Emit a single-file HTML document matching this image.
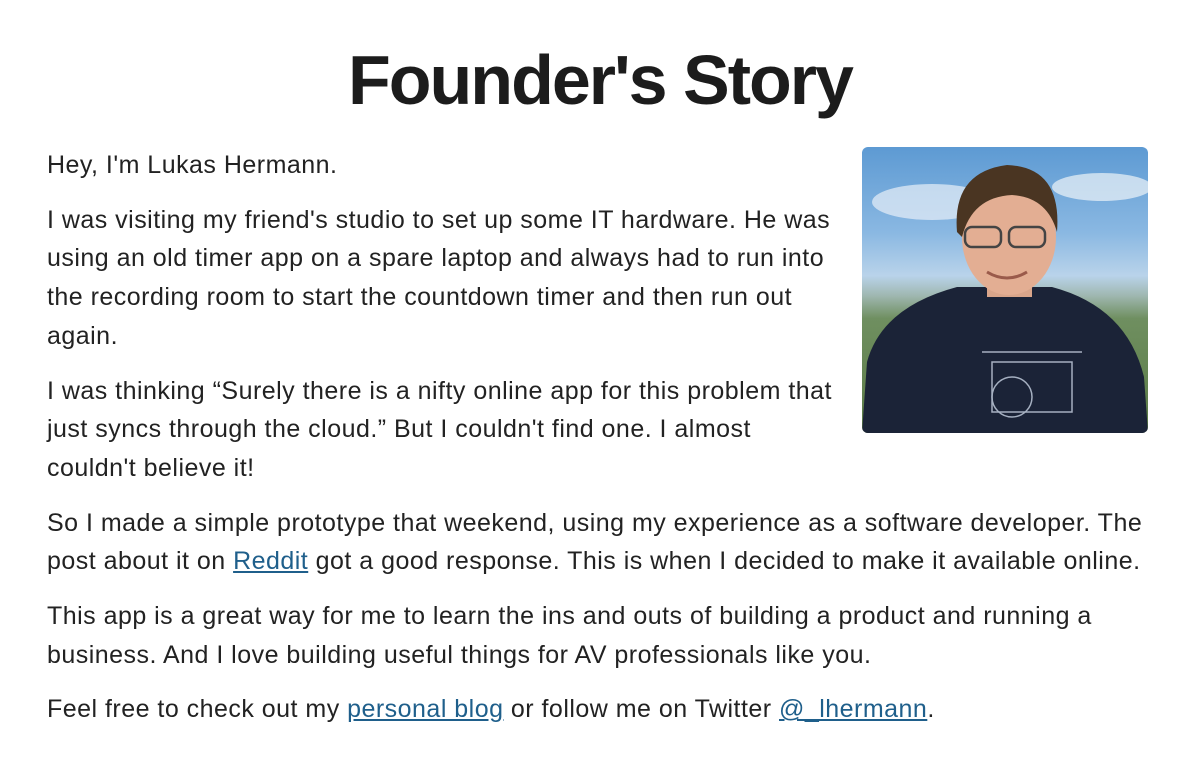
<!DOCTYPE html>
<html><head><meta charset="utf-8"><style>
html,body{margin:0;padding:0;background:#fff;width:1200px;height:772px;overflow:hidden}
body{font-family:"Liberation Sans",Arial,sans-serif;color:#222;position:relative}
h1{position:absolute;left:0;width:1200px;top:36px;margin:0;text-align:center;font-size:70px;font-weight:bold;letter-spacing:-2px;line-height:88px;color:#1c1c1c}
.txt{position:absolute;left:47px;top:146px;width:1140px;font-size:25px;letter-spacing:0.48px;line-height:38.7px}
p{margin:0 0 16px 0;white-space:nowrap}
a{color:#1f5f8b;text-decoration:underline}
.photo{position:absolute;left:862px;top:147px;width:286px;height:286px;border-radius:6px;overflow:hidden;
background:linear-gradient(#5d9ad3 0%,#8ab8e2 30%,#b9d3ea 45%,#9fb7b0 52%,#6f8f60 60%,#5a7a45 100%)}
</style></head><body>
<h1>Founder's Story</h1>
<div class="photo">
<svg width="286" height="286" viewBox="0 0 286 286">
<ellipse cx="70" cy="55" rx="60" ry="18" fill="#e8f0f8" opacity=".7"/>
<ellipse cx="240" cy="40" rx="50" ry="14" fill="#eef3f8" opacity=".7"/>
<path d="M0 286 L5 215 Q20 160 95 140 L190 140 Q265 160 282 230 L286 286 Z" fill="#1b2337"/>
<rect x="125" y="125" width="45" height="25" fill="#d9a58a"/>
<ellipse cx="147" cy="90" rx="47" ry="58" fill="#e3ae93"/>
<path d="M95 85 Q90 25 145 18 Q200 20 195 85 Q185 50 150 48 Q110 50 100 90 Z" fill="#4a3522"/>
<rect x="103" y="80" width="36" height="20" rx="7" fill="none" stroke="#444" stroke-width="2.5"/>
<rect x="147" y="80" width="36" height="20" rx="7" fill="none" stroke="#444" stroke-width="2.5"/>
<path d="M125 125 Q145 137 165 125" stroke="#9a5a4a" stroke-width="3" fill="none"/>
<g stroke="#c9d4e4" stroke-width="1.5" fill="none" opacity=".8"><rect x="130" y="215" width="80" height="50"/><circle cx="150" cy="250" r="20"/><path d="M120 205 L220 205"/></g>
</svg>
</div>
<div class="txt">
<p>Hey, I'm Lukas Hermann.</p>
<p>I was visiting my friend's studio to set up some IT hardware. He was<br>using an old timer app on a spare laptop and always had to run into<br>the recording room to start the countdown timer and then run out<br>again.</p>
<p>I was thinking “Surely there is a nifty online app for this problem that<br>just syncs through the cloud.” But I couldn't find one. I almost<br>couldn't believe it!</p>
<p>So I made a simple prototype that weekend, using my experience as a software developer. The<br>post about it on <a>Reddit</a> got a good response. This is when I decided to make it available online.</p>
<p>This app is a great way for me to learn the ins and outs of building a product and running a<br>business. And I love building useful things for AV professionals like you.</p>
<p>Feel free to check out my <a>personal blog</a> or follow me on Twitter <a>@_lhermann</a>.</p>
</div>
</body></html>
